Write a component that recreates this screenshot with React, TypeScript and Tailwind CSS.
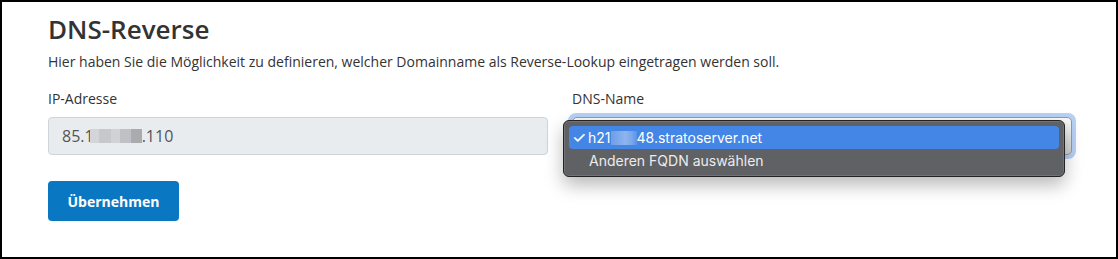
import React from "react";

const blurIp =
  "bg-[linear-gradient(90deg,#d3d5d8_0%,#d3d5d8_18%,#c6c8cb_18%,#c6c8cb_40%,#d0d2d5_40%,#d0d2d5_58%,#bfc1c4_58%,#bfc1c4_78%,#a9abae_78%,#a9abae_100%)]";
const blurHost =
  "bg-[linear-gradient(90deg,#6f9ee8_0%,#7ea9ec_30%,#8fb5ee_55%,#7aa6eb_80%,#5a92e8_100%)]";

export default function App() {
  return (
    <div
      className="w-[1118px] h-[259px] border-2 border-black bg-white pl-[46px] pr-[44px] pt-[11px] text-[#333]"
      style={{ fontFamily: '"Open Sans", "Noto Sans", sans-serif' }}
    >
      <h2 className="text-[26px] leading-[32px] font-semibold text-[#333]">DNS-Reverse</h2>
      <p className="mt-[6px] text-[14px] leading-[21px] text-[#333]">
        Hier haben Sie die Möglichkeit zu definieren, welcher Domainname als Reverse-Lookup eingetragen werden soll.
      </p>

      <div className="mt-[16px] grid grid-cols-2 gap-[24px]">
        <div>
          <label className="block text-[14px] leading-[21px] text-[#333]">IP-Adresse</label>
          <div className="mt-[8px] h-[38px] rounded-[4px] border border-[#ced4da] bg-[#e9ecef] pl-[13px] flex items-center text-[16px] text-[#555]">
            <span>85.1</span>
            <span className={"inline-block w-[52px] h-[14px] -ml-[4px] " + blurIp} />
            <span>.110</span>
          </div>
        </div>

        <div>
          <label className="block text-[14px] leading-[21px] text-[#333]">DNS-Name</label>
          <div className="relative mt-[8px] h-[38px]">
            <div className="absolute -inset-[4px] rounded-[8px] bg-[#b7d0f6]" />
            <div className="absolute inset-0 rounded-[5px] border border-[#9a9a9a] bg-[linear-gradient(180deg,#fbfbfb,#d3d3d3)]" />
            <div
              className="absolute left-[-9px] top-[3px] w-[502px] rounded-[6px] border border-[#232323] bg-[#5f6165] px-[5px] pt-[5px] pb-[4px] shadow-[0_8px_18px_rgba(0,0,0,0.28),inset_0_0_0_1px_rgba(255,255,255,0.12)]"
              style={{ fontFamily: 'Inter, "Liberation Sans", sans-serif' }}
            >
              <div className="relative h-[23px] rounded-[4px] bg-[#4486e6] pl-[19px] flex items-center text-[14px] text-white">
                <span className="absolute left-[3px] top-[1px] text-[16px] leading-[21px] font-medium">✓</span>
                <span>h21</span>
                <span className={"inline-block w-[26px] h-[14px] " + blurHost} />
                <span>48.stratoserver.net</span>
              </div>
              <div className="h-[23px] pl-[20px] flex items-center text-[14px] text-[#ececec]">
                Anderen FQDN auswählen
              </div>
            </div>
          </div>
        </div>
      </div>

      <button className="mt-[26px] w-[131px] h-[40px] rounded-[4px] bg-[#0a77c2] text-[14px] font-bold text-white">
        Übernehmen
      </button>
    </div>
  );
}
